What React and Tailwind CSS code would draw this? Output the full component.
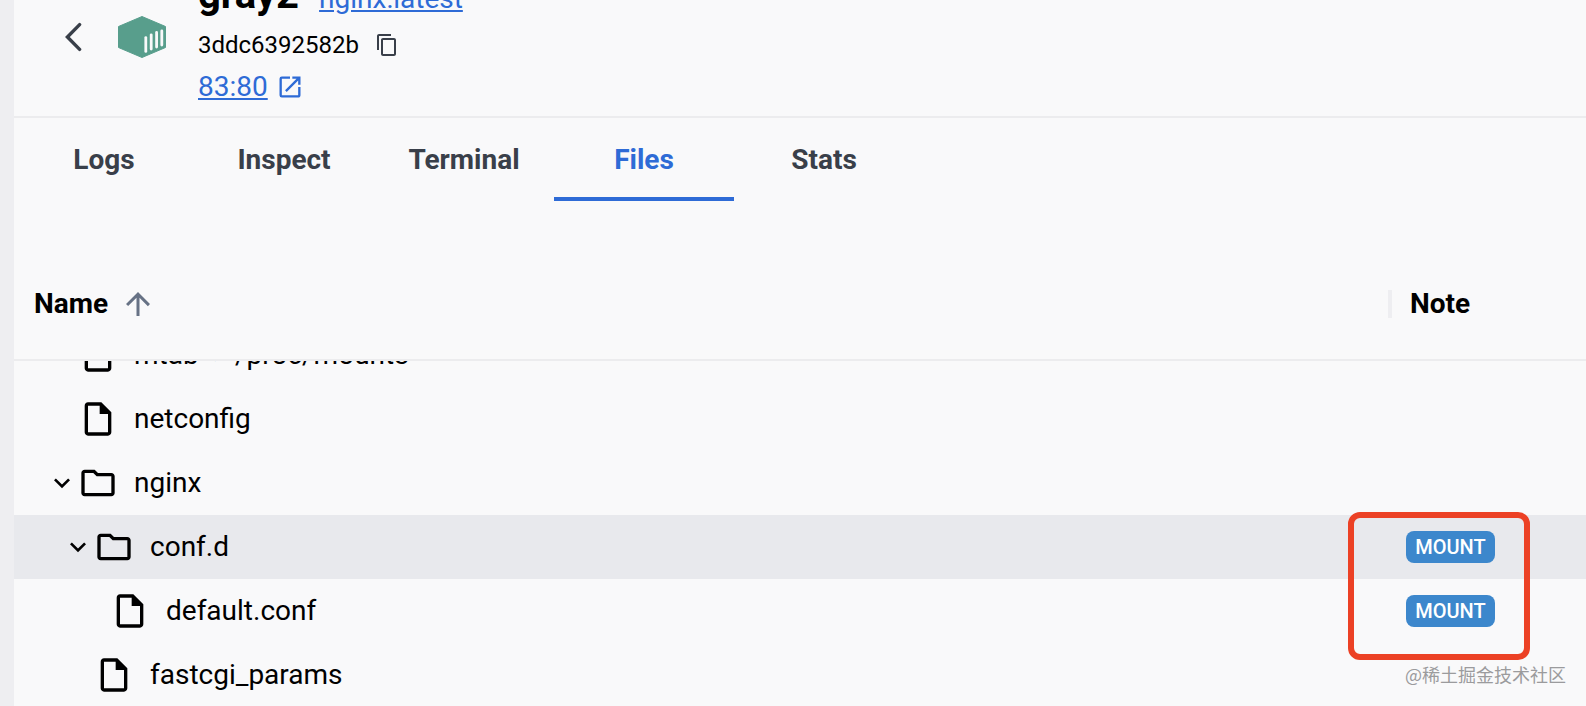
import React, { useState } from 'react';
import {
  MdArrowUpward,
  MdContentCopy,
  MdKeyboardArrowDown,
  MdOpenInNew,
  MdOutlineFolder,
  MdOutlineInsertDriveFile,
} from 'react-icons/md';

const TABS = ['Logs', 'Inspect', 'Terminal', 'Files', 'Stats'];

const FILES = [
  { name: 'mtab -> /proc/mounts', type: 'file', level: 0 },
  { name: 'netconfig', type: 'file', level: 0 },
  { name: 'nginx', type: 'folder', level: 0 },
  { name: 'conf.d', type: 'folder', level: 1, mount: true, selected: true },
  { name: 'default.conf', type: 'file', level: 2, mount: true },
  { name: 'fastcgi_params', type: 'file', level: 1 },
];

const INDENT = ['pl-8', 'pl-12', 'pl-16'];

const BackIcon = () => (
  <svg className="w-5 h-8" viewBox="0 0 20 32" fill="none" stroke="currentColor" strokeWidth="3.4" strokeLinecap="round">
    <path d="M17.6 3.6 L5.4 16 L17.6 28.4" />
  </svg>
);

const ContainerIcon = () => (
  <svg className="w-12 h-[42px] shrink-0" viewBox="0 0 48 42">
    <path d="M24 0.5 L47.5 10.5 V31.5 L24 41.5 L0.5 31.5 V10.5 Z" fill="#589e8c" stroke="#589e8c" strokeLinejoin="round" />
    <g stroke="#f9f9fa" strokeWidth="2.8" strokeLinecap="round">
      <path d="M27.8 21.6 V35.4" />
      <path d="M33.2 18.8 V33" />
      <path d="M38.6 16.4 V31" />
      <path d="M43.8 14.8 V29" />
    </g>
  </svg>
);

const ContainerHeader = () => (
  <header className="flex items-start border-b-2 border-[#ececee] pl-12">
    <button aria-label="Back" className="mt-[21px] text-[#393f49]">
      <BackIcon />
    </button>
    <div className="ml-9 mt-4">
      <ContainerIcon />
    </div>
    {/* title line is scrolled partly out of view */}
    <div className="-mt-[37px] ml-8 pb-[5px]">
      <div className="flex items-baseline gap-5">
        <h1 className="text-[40px] leading-[64px] font-bold text-black">gray2</h1>
        <a href="#image" className="text-[28px] text-[#2e6bd6] underline">nginx:latest</a>
      </div>
      <div className="flex h-9 items-center gap-4 text-2xl text-black">
        <span>3ddc6392582b</span>
        <button aria-label="Copy container id" className="text-[#393f49]">
          <MdContentCopy className="size-6" />
        </button>
      </div>
      <a href="#port" className="flex h-12 items-center gap-2 text-[28px] text-[#2e6bd6]">
        <span className="underline">83:80</span>
        <MdOpenInNew className="size-7" />
      </a>
    </div>
  </header>
);

const FileRow = ({ file }) => {
  const isFolder = file.type === 'folder';
  return (
    <tr className={file.selected ? 'bg-[#e8e9ed]' : ''}>
      <td className="p-0">
        <div className={`flex h-16 items-center ${INDENT[file.level]}`}>
          {isFolder ? (
            <button aria-label={`Collapse ${file.name}`}>
              <MdKeyboardArrowDown className="size-8" />
            </button>
          ) : (
            <span className="w-8" />
          )}
          {isFolder ? (
            <MdOutlineFolder className="size-10" />
          ) : (
            <MdOutlineInsertDriveFile className="size-10" />
          )}
          <span className="ml-4 whitespace-nowrap">{file.name}</span>
        </div>
      </td>
      <td className="w-[198px] p-0 pl-[18px]">
        {file.mount && (
          <span className="flex h-8 w-[89px] items-center justify-center rounded-lg bg-[#3c87cc] text-xl font-medium text-white">
            MOUNT
          </span>
        )}
      </td>
    </tr>
  );
};

const App = () => {
  const [activeTab, setActiveTab] = useState('Files');

  return (
    <div className="relative flex h-screen overflow-hidden bg-[#f9f9fa] font-['Roboto',sans-serif]">
      <aside className="w-[14px] shrink-0 bg-[#eeeef1]" />
      <main className="flex min-w-0 flex-1 flex-col">
        <ContainerHeader />

        <nav className="flex">
          {TABS.map((tab) => (
            <button
              key={tab}
              onClick={() => setActiveTab(tab)}
              className={`h-[83px] w-[180px] border-b-4 pt-1 text-[28px] font-bold ${
                activeTab === tab
                  ? 'border-[#2e6bd6] text-[#2e6bd6]'
                  : 'border-transparent text-[#393f49]'
              }`}
            >
              {tab}
            </button>
          ))}
        </nav>

        <div className="mt-12 flex h-28 shrink-0 items-center border-b-2 border-[#ececee] text-[28px] font-bold text-black">
          <div className="flex flex-1 items-center gap-3 pl-5">
            Name
            <MdArrowUpward className="size-9 text-[#677285]" />
          </div>
          <div className="flex w-[198px] items-center">
            <span className="h-7 w-1 bg-[#eeeef1]" />
            <span className="pl-[18px]">Note</span>
          </div>
        </div>

        <div className="min-h-0 flex-1 overflow-hidden">
          {/* list is scrolled by part of a row */}
          <table className="-mt-[38px] w-full border-collapse text-[28px] text-black">
            <tbody>
              {FILES.map((file) => (
                <FileRow key={file.name} file={file} />
              ))}
            </tbody>
          </table>
        </div>
      </main>

      <div className="pointer-events-none absolute right-14 bottom-[46px] h-[148px] w-[182px] rounded-xl border-6 border-[#ec4125]" />
      <span className="absolute right-5 bottom-[18px] font-['Noto_Sans_CJK_SC',sans-serif] text-lg leading-7 text-[#9b9b9d]">
        @稀土掘金技术社区
      </span>
    </div>
  );
};

export default App;
